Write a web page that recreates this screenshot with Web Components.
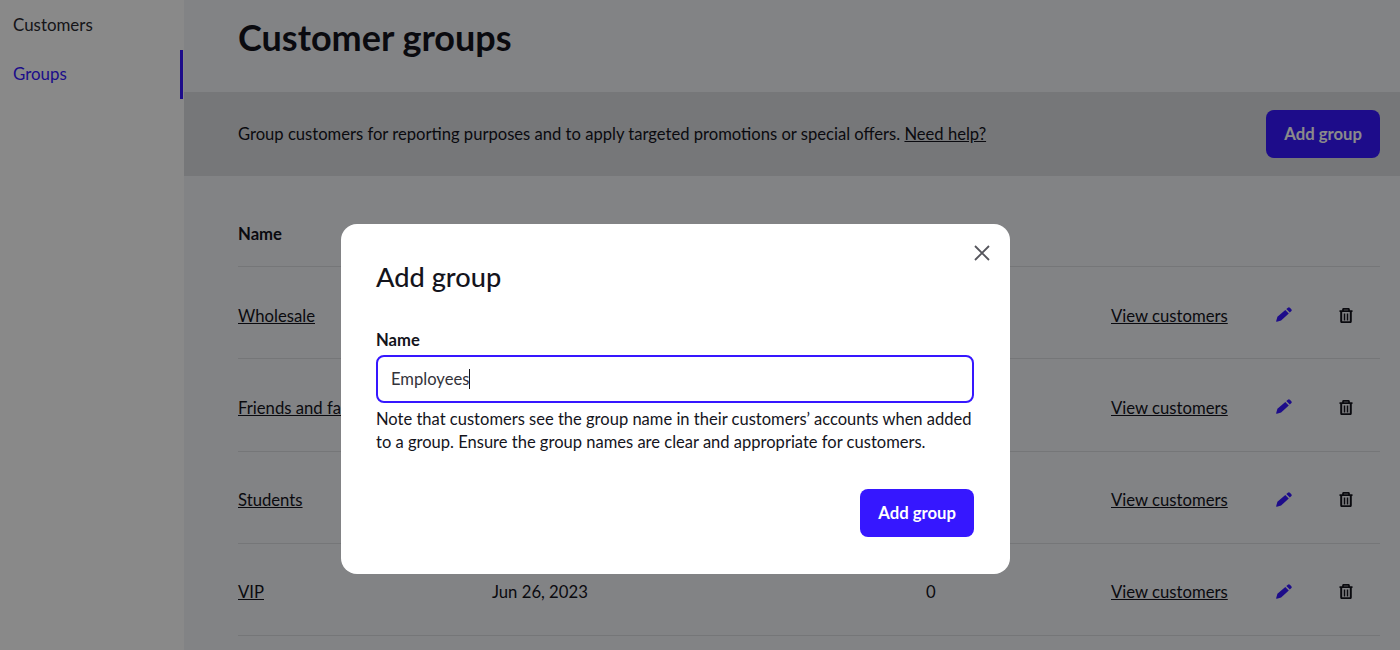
<!DOCTYPE html>
<html lang="en">
<head>
<meta charset="utf-8">
<title>Customer groups</title>
<style>
  html, body { margin: 0; height: 100%; overflow: hidden; }
  body { font-family: Lato, "Open Sans", sans-serif; color: #14141c; background: #f0f2f6; }
</style>
</head>
<body>
<groups-page>
  <side-nav slot="nav">
    <nav-item>Customers</nav-item>
    <nav-item active>Groups</nav-item>
  </side-nav>
  <page-title>Customer groups</page-title>
  <info-banner>
    Group customers for reporting purposes and to apply targeted promotions or special offers. <a href="#">Need help?</a>
    <action-button slot="action">Add group</action-button>
  </info-banner>
  <groups-table>
    <group-row name="Wholesale"></group-row>
    <group-row name="Friends and family"></group-row>
    <group-row name="Students"></group-row>
    <group-row name="VIP" date="Jun 26, 2023" count="0"></group-row>
  </groups-table>
</groups-page>
<modal-dialog heading="Add group">
  <text-field label="Name" value="Employees">
    Note that customers see the group name in their customers’ accounts when added to a group. Ensure the group names are clear and appropriate for customers.
  </text-field>
  <action-button slot="footer">Add group</action-button>
</modal-dialog>

<script>
class GroupsPage extends HTMLElement {
  constructor() {
    super();
    this.attachShadow({ mode: 'open' }).innerHTML = `
      <style>
        :host { display: grid; grid-template-columns: 184px 1fr; height: 650px; overflow: hidden; }
        main { min-width: 0; }
      </style>
      <slot name="nav"></slot>
      <main><slot></slot></main>
    `;
  }
}

class SideNav extends HTMLElement {
  constructor() {
    super();
    this.attachShadow({ mode: 'open' }).innerHTML = `
      <style>
        :host { display: block; background: #fdfdfd; padding-top: 1px; height: 100%; box-sizing: border-box; color: #2a2a30; }
      </style>
      <slot></slot>
    `;
  }
}

class NavItem extends HTMLElement {
  constructor() {
    super();
    this.attachShadow({ mode: 'open' }).innerHTML = `
      <style>
        :host { display: flex; align-items: center; height: 49px; padding: 0 0 2px 13px; font-size: 16.9px; box-sizing: border-box; margin-right: 1px; }
        :host([active]) { color: #3617ff; border-right: 3px solid #3617ff; }
      </style>
      <slot></slot>
    `;
  }
}

class PageTitle extends HTMLElement {
  constructor() {
    super();
    this.attachShadow({ mode: 'open' }).innerHTML = `
      <style>
        :host { display: flex; align-items: center; height: 76px; padding: 0 0 16px 54px; }
        h1 { margin: 0; font-size: 36px; font-weight: 700; line-height: 1.2; }
      </style>
      <h1><slot></slot></h1>
    `;
  }
}

class InfoBanner extends HTMLElement {
  constructor() {
    super();
    this.attachShadow({ mode: 'open' }).innerHTML = `
      <style>
        :host { display: flex; align-items: center; justify-content: space-between; height: 84px; padding: 0 20px 0 54px; background: #dadce0; font-size: 16.6px; }
        ::slotted(a) { color: inherit; }
      </style>
      <div><slot></slot></div>
      <slot name="action"></slot>
    `;
  }
}

class ActionButton extends HTMLElement {
  constructor() {
    super();
    this.attachShadow({ mode: 'open' }).innerHTML = `
      <style>
        :host { display: inline-block; }
        button { display: block; height: 48px; padding: 0 18px; border: 0; border-radius: 8px; background: #3617ff; color: #fff; font: 700 16.7px Lato, "Open Sans", sans-serif; }
      </style>
      <button><slot></slot></button>
    `;
  }
}

class GroupsTable extends HTMLElement {
  constructor() {
    super();
    this.attachShadow({ mode: 'open' }).innerHTML = `
      <style>
        :host { display: block; margin: 26px 20px 0 54px; font-size: 16.7px; }
        .head { display: flex; align-items: center; height: 65px; font-weight: 700; border-bottom: 1px solid #d8dade; box-sizing: border-box; }
      </style>
      <div class="head">Name</div>
      <slot></slot>
    `;
  }
}

class GroupRow extends HTMLElement {
  constructor() {
    super();
    const name = this.getAttribute('name') || '';
    const date = this.getAttribute('date') || '';
    const count = this.getAttribute('count') || '';
    this.attachShadow({ mode: 'open' }).innerHTML = `
      <style>
        :host { display: grid; grid-template-columns: 254px 434px 185px 150px 46px 1fr; align-items: center; height: 92.25px; padding-top: 6px; border-bottom: 1px solid #d8dade; box-sizing: border-box; }
        a { color: inherit; }
        svg { display: block; }
        .edit { justify-self: center; color: #3617ff; margin-top: -2px; }
        .del { margin-left: 32px; margin-top: -1px; }
      </style>
      <a href="#">${name}</a>
      <span>${date}</span>
      <span>${count}</span>
      <a href="#">View customers</a>
      <svg class="edit" width="16" height="15" viewBox="0 0 16 15" fill="currentColor"><path d="M11.900.7a1.500 1.500 0 0 1 2 .1l1.400 1.500a1.400 1.400 0 0 1-.1 2L13.800 5.600 10.300 2zM9.300 2.900l3.500 3.600-7.700 6.900L.9 14.800c-.4.100-.8-.3-.7-.7l1.200-4.400z"/></svg>
      <svg class="del" width="14" height="15" viewBox="0 0 14 15" fill="none" stroke="currentColor"><path stroke-width="1.800" d="M.5 3.200h13M4 3V1.700C4 1.100 4.400.8 5 .8h4c.6 0 1 .3 1 .9V3"/><path stroke-width="2" d="M2.200 3.500v9.700c0 .7.400 1.100 1 1.100h7.600c.6 0 1-.4 1-1.100V3.500"/><path stroke-width="1.500" d="M5.500 5.500v7M8.500 5.500v7"/></svg>
    `;
  }
}

class TextField extends HTMLElement {
  constructor() {
    super();
    const label = this.getAttribute('label') || '';
    const value = this.getAttribute('value') || '';
    this.attachShadow({ mode: 'open' }).innerHTML = `
      <style>
        :host { display: block; }
        label { display: block; font-size: 16.6px; font-weight: 700; line-height: 20px; margin-bottom: 5px; }
        .box { display: flex; align-items: center; height: 48px; padding: 0 12px 0 13px; border: 2px solid #3617ff; border-radius: 8px; box-sizing: border-box; font-size: 16.6px; color: #33333a; }
        .caret { width: 1px; height: 20px; background: #14141c; }
        p { margin: 5px 0 0; font-size: 16.55px; line-height: 23.2px; }
      </style>
      <label>${label}</label>
      <div class="box">${value}<span class="caret"></span></div>
      <p><slot></slot></p>
    `;
  }
}

class ModalDialog extends HTMLElement {
  constructor() {
    super();
    const heading = this.getAttribute('heading') || '';
    this.attachShadow({ mode: 'open' }).innerHTML = `
      <style>
        :host { position: fixed; inset: 0; background: rgba(0, 0, 0, .46); }
        .box { position: absolute; left: 341px; top: 224px; width: 669px; height: 350px; padding: 35px 36px 0 35px; box-sizing: border-box; background: #fff; border-radius: 16px; }
        h2 { margin: 0 0 35px; font-family: "Lato Medium", Lato, sans-serif; font-size: 27.2px; font-weight: 500; line-height: 36px; }
        .close { position: absolute; top: 21px; right: 20px; display: block; color: #55555c; }
        .foot { display: flex; justify-content: flex-end; margin-top: 35px; }
      </style>
      <div class="box">
        <svg class="close" width="16" height="16" viewBox="0 0 16 16" fill="none" stroke="currentColor" stroke-width="1.800"><path d="M1 1l14 14M15 1L1 15"/></svg>
        <h2>${heading}</h2>
        <slot></slot>
        <div class="foot"><slot name="footer"></slot></div>
      </div>
    `;
  }
}

customElements.define('groups-page', GroupsPage);
customElements.define('side-nav', SideNav);
customElements.define('nav-item', NavItem);
customElements.define('page-title', PageTitle);
customElements.define('info-banner', InfoBanner);
customElements.define('action-button', ActionButton);
customElements.define('groups-table', GroupsTable);
customElements.define('group-row', GroupRow);
customElements.define('text-field', TextField);
customElements.define('modal-dialog', ModalDialog);
</script>
</body>
</html>
